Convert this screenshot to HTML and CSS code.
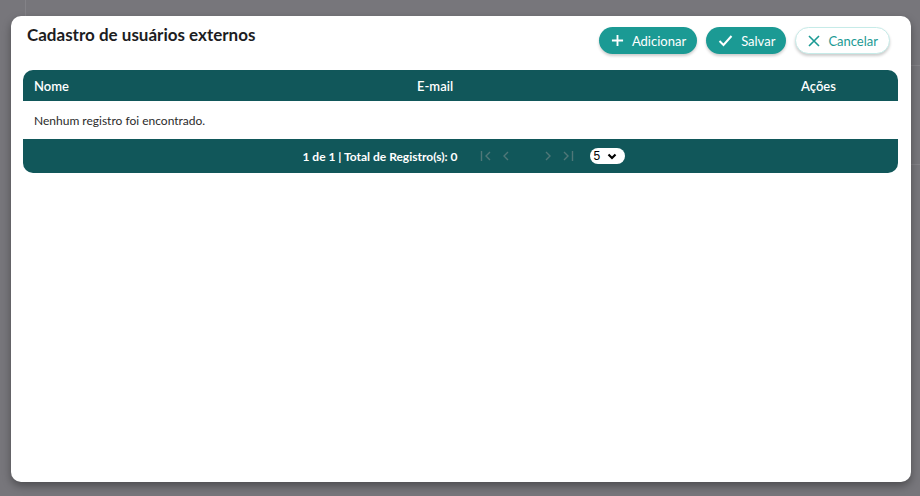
FILE: index.html
```html
<!DOCTYPE html>
<html lang="pt-BR">
<head>
  <meta charset="UTF-8">
  <title>Cadastro de usuários externos</title>
  <link rel="stylesheet" href="styles.css">
</head>
<body>
  <div class="backdrop">
    <div class="modal">
      <div class="modal-top">
        <h2>Cadastro de usuários externos</h2>
        <div class="actions">
          <button class="btn btn-primary">
            <svg width="13" height="13" viewBox="0 0 14 14"><path d="M7 1v12M1 7h12" stroke="#fff" stroke-width="2" fill="none"/></svg>
            Adicionar
          </button>
          <button class="btn btn-primary">
            <svg width="15" height="13" viewBox="0 0 15 13"><path d="M1.5 7l4 4L13.5 2" stroke="#fff" stroke-width="2" fill="none"/></svg>
            Salvar
          </button>
          <button class="btn btn-outline">
            <svg width="12" height="12" viewBox="0 0 12 12"><path d="M1 1l10 10M11 1L1 11" stroke="#1b9a94" stroke-width="1.6" fill="none"/></svg>
            Cancelar
          </button>
        </div>
      </div>

      <div class="grid">
        <div class="grid-head">
          <span>Nome</span>
          <span>E-mail</span>
          <span>Ações</span>
        </div>
        <div class="grid-empty">Nenhum registro foi encontrado.</div>
        <div class="grid-foot">
          <span class="page-info">1 de 1 | Total de Registro(s): 0</span>
          <div class="pager">
            <svg width="12" height="12" viewBox="0 0 12 12"><path d="M1.5 1v10M10 2L6 6l4 4" stroke="#4f7778" stroke-width="1.4" fill="none"/></svg>
            <svg width="8" height="12" viewBox="0 0 8 12"><path d="M6 2L2 6l4 4" stroke="#4f7778" stroke-width="1.4" fill="none"/></svg>
            <span class="pager-gap"></span>
            <svg width="8" height="12" viewBox="0 0 8 12"><path d="M2 2l4 4-4 4" stroke="#4f7778" stroke-width="1.4" fill="none"/></svg>
            <svg width="12" height="12" viewBox="0 0 12 12"><path d="M2 2l4 4-4 4M10.5 1v10" stroke="#4f7778" stroke-width="1.4" fill="none"/></svg>
          </div>
          <div class="page-size">
            5
            <svg width="10" height="7" viewBox="0 0 10 7"><path d="M1.5 1.5L5 5l3.5-3.5" stroke="#000" stroke-width="2.2" fill="none"/></svg>
          </div>
        </div>
      </div>
    </div>
  </div>
</body>
</html>
```

FILE: styles.css
```css
* { box-sizing: border-box; }

body {
  margin: 0;
  background: #77767b;
  font-family: "Lato", "Open Sans", sans-serif;
  color: #222;
}

.backdrop {
  height: 496px;
  padding: 16px 9px 0 11px;
  background:
    linear-gradient(#838287, #838287) 25px 0 / 1px 16px no-repeat,
    linear-gradient(#838287, #838287) 911px 65px / 9px 1px no-repeat,
    linear-gradient(#838287, #838287) 911px 164px / 9px 1px no-repeat;
}

.modal {
  height: 466px;
  background: #fff;
  border-radius: 10px;
  padding: 11px 13px 0 12px;
  box-shadow: 0 4px 8px rgba(0,0,0,0.35);
}

.modal-top {
  display: flex;
  justify-content: space-between;
  align-items: flex-start;
  height: 43px;
}
.modal-top h2 {
  margin: 0;
  padding: 0 0 0 4px;
  font-size: 17px;
  font-weight: 700;
  line-height: 16px;
  color: #1d1d1f;
}

.actions { display: flex; gap: 9px; padding-right: 8px; }

.btn {
  display: flex;
  align-items: center;
  gap: 8px;
  height: 27px;
  padding: 0 11px 0 12px;
  border-radius: 14px;
  font-family: inherit;
  font-size: 13px;
  cursor: pointer;
  box-shadow: 0 2px 3px rgba(0,0,0,0.2);
}
.btn-primary { background: #1b9a94; color: #fff; border: none; }
.btn-outline {
  background: #fff;
  color: #1b9a94;
  border: 1px solid #c6ebe8;
  padding: 0 11px 0 12px;
  gap: 8px;
}

.grid { border-radius: 10px; overflow: hidden; }

.grid-head {
  display: grid;
  grid-template-columns: 383px 384px 1fr;
  align-items: center;
  height: 31px;
  padding: 0 11px;
  background: #11575a;
  color: #fff;
  font-size: 13px;
  font-weight: 600;
}

.grid-empty {
  height: 38px;
  padding: 0 11px;
  display: flex;
  align-items: center;
  font-size: 12px;
  color: #2b2b2b;
}

.grid-foot {
  height: 34px;
  background: #11575a;
  display: flex;
  align-items: center;
  justify-content: center;
  padding-left: 6px;
  color: #fff;
  font-size: 12px;
  font-weight: 700;
}
.page-info { margin-right: 22px; }

.pager { display: flex; align-items: center; gap: 10px; margin-right: 16px; }
.pager-gap { width: 14px; }

.page-size {
  display: flex;
  align-items: center;
  gap: 7px;
  height: 16px;
  width: 35px;
  padding: 0 4px 0 4px;
  background: #fff;
  border-radius: 8px;
  color: #000;
  font-family: "Liberation Sans", Arial, sans-serif;
  font-size: 12px;
  font-weight: 400;
}
```
